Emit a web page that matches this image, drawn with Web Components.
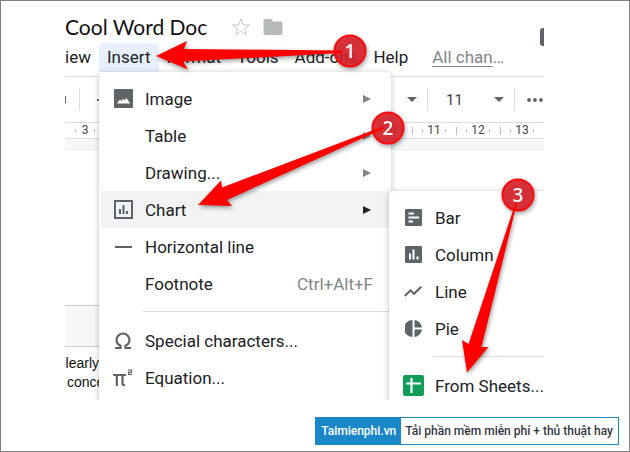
<!DOCTYPE html>
<html lang="en">
<head>
<meta charset="utf-8">
<title>Cool Word Doc</title>
<style>
  body { margin: 0; font-family: Roboto, "Liberation Sans", sans-serif; color: #202124; background: #fff; }
</style>
</head>
<body>
<doc-page></doc-page>

<script>
const define = (name, html) => {
  const template = document.createElement('template');
  template.innerHTML = html;
  customElements.define(name, class extends HTMLElement {
    constructor() {
      super();
      this.attachShadow({ mode: 'open' }).append(template.content.cloneNode(true));
    }
    connectedCallback() {
      this.shadowRoot.querySelectorAll('[data-attr]').forEach(el => {
        el.textContent = this.getAttribute(el.dataset.attr) || '';
      });
    }
  });
};

/* One row of a drop-down menu: icon slot, label, shortcut or submenu arrow */
define('menu-entry', `
  <style>
    :host { display: block; }
    button { display: flex; align-items: center; width: 100%; height: 37px; padding: 0 18px 0 0; border: 0;
      background: none; font: inherit; color: inherit; text-align: left; white-space: nowrap; }
    :host([active]) button { background: #f1f3f4; }
    .icon { width: 44px; flex: none; display: flex; justify-content: center; color: #5f6368; }
    .label { flex: 1; }
    .keys { color: #80868b; }
    .arrow { display: none; width: 8px; height: 8px; margin-right: 2px; fill: #80868b; }
    :host([submenu]) .arrow { display: block; }
    :host([active]) .arrow { fill: #202124; }
  </style>
  <button type="button" role="menuitem">
    <span class="icon"><slot name="icon"></slot></span>
    <span class="label"><slot></slot></span>
    <span class="keys" data-attr="keys"></span>
    <svg class="arrow" viewBox="0 0 8 8"><path d="M0 0 8 4 0 8Z"/></svg>
  </button>`);

define('menu-rule', `
  <style>
    :host { display: block; height: 1px; margin: 9px 0 10px 42px; background: #dadce0; }
  </style>`);

define('menu-panel', `
  <style>
    :host { display: block; box-sizing: border-box; padding: 8px 0 8px 2px; background: #fff;
      border-radius: 4px; box-shadow: 0 1px 6px rgba(60, 64, 67, .32); font-size: 17px; line-height: 24px; }
  </style>
  <div role="menu"><slot></slot></div>`);

define('title-bar', `
  <style>
    :host { display: flex; align-items: center; height: 42px; padding-top: 9px; box-sizing: border-box; }
    h1 { margin: 0; font: 400 21px/28px Lato, sans-serif; color: #111; white-space: nowrap; }
    button { padding: 0; border: 0; background: none; display: flex; }
    .star { margin-left: 24px; }
    .folder { margin-left: 12px; }
    .comments { margin-left: auto; width: 4px; height: 18px; margin-top: 20px; background: #5f6368; border-radius: 3px 0 0 3px; }
  </style>
  <h1>Cool Word Doc</h1>
  <button class="star" aria-label="Star"><svg width="20" height="20" viewBox="0 0 20 20"><path d="M10 1.8 12.1 7.8 18.4 7.9 13.4 11.7 15.2 17.8 10 14.2 4.8 17.8 6.6 11.7 1.6 7.9 7.9 7.8Z" fill="none" stroke="#c8cacc"/></svg></button>
  <button class="folder" aria-label="Move"><svg width="20" height="18" viewBox="0 0 20 18"><path d="M2.5 1H8l2 2.5h7.500a2 2 0 0 1 2 2V15a2 2 0 0 1-2 2h-15a2 2 0 0 1-2-2V3a2 2 0 0 1 2-2Z" fill="#b7b9bb"/></svg></button>
  <button class="comments" aria-label="Comments"></button>`);

define('menu-bar', `
  <style>
    :host { display: flex; height: 33px; font-size: 17px; border-bottom: 1px solid #dadce0; white-space: nowrap; }
    button, a { height: 29px; line-height: 29px; padding: 0 8px; border: 0; background: none; font-family: inherit; font-size: inherit; color: inherit; }
    .first { width: 34px; overflow: hidden; display: flex; justify-content: flex-end; flex: none; }
    .open { background: #e8f0fe; border-radius: 4px 4px 0 0; }
    a { margin-left: 8px; color: #80868b; text-decoration: none; }
    u { text-underline-offset: 3px; text-decoration-thickness: 1px; }
  </style>
  <div class="first"><button>View</button></div>
  <button class="open" aria-expanded="true">Insert</button>
  <button>Format</button><button>Tools</button><button>Add-ons</button><button>Help</button>
  <a href="#history"><u>All chan</u>…</a>`);

define('tool-bar', `
  <style>
    :host { display: flex; align-items: center; height: 45px; border-bottom: 1px solid #dadce0; color: #3c4043; }
    .bit { width: 1px; height: 7px; background: #5f6368; }
    .dash { width: 3px; height: 2px; background: #5f6368; margin-left: 17px; }
    i { width: 1px; height: 23px; background: #dadce0; }
    .left { margin-left: 13px; }
    .gap { flex: 1; }
    svg { fill: #5f6368; flex: none; }
    label { display: flex; align-items: center; width: 58px; margin: 0 10px 0 18px; }
    select { appearance: none; border: 0; background: none; padding: 0; flex: 1; font: 15px/20px Roboto, sans-serif; color: inherit; }
    .styles { margin-right: 10px; }
    .more { padding: 0 1px 0 12px; border: 0; background: none; display: flex; }
  </style>
  <span class="bit"></span><i class="left"></i><span class="dash"></span>
  <span class="gap"></span>
  <svg class="styles" width="10" height="5" viewBox="0 0 10 5"><path d="M0 0H10L5 5Z"/></svg>
  <i></i>
  <label><select aria-label="Font size"><option>11</option></select>
    <svg width="10" height="5" viewBox="0 0 10 5"><path d="M0 0H10L5 5Z"/></svg></label>
  <i></i>
  <button class="more" aria-label="More"><svg width="16" height="4" viewBox="0 0 16 4"><circle cx="2" cy="2" r="1.900"/><circle cx="8" cy="2" r="1.900"/><circle cx="14" cy="2" r="1.900"/></svg></button>`);

define('ruler-mark', `
  <style>
    :host { display: flex; align-items: center; justify-content: space-between; width: 44px; box-sizing: border-box;
      padding: 0 10px; height: 15px; font-size: 12px; line-height: 15px; }
    i { width: 1px; height: 3px; background: #bdc1c6; }
    :host([edge]) { background: linear-gradient(#bdc1c6, #bdc1c6) 0 50% / 1px 8px no-repeat; }
  </style>
  <i></i><slot></slot><i></i>`);

define('doc-ruler', `
  <style>
    :host { display: flex; height: 15px; border-bottom: 1px solid #dadce0; color: #444; }
    .first { margin-right: auto; width: 40px; }
  </style>
  <ruler-mark class="first">3</ruler-mark>
  <ruler-mark>10</ruler-mark><ruler-mark edge>11</ruler-mark><ruler-mark edge>12</ruler-mark><ruler-mark edge>13</ruler-mark>`);

define('doc-sheet', `
  <style>
    :host { display: block; padding-top: 10px; background: #f6f7f9; }
    .paper { background: #fff; border-top: 1px solid #eceef0; padding-top: 155px; min-height: 95px; }
    .band { height: 40px; background: #f7f7f7; border: 1px solid #ccc; border-width: 1px 0; }
    .line { width: 34px; overflow: hidden; display: flex; justify-content: flex-end; white-space: nowrap;
      font: 14px/19px "Liberation Sans", Arial, sans-serif; color: #111; }
    .start { justify-content: flex-start; padding-left: 2px; }
    .text { padding-top: 7px; }
  </style>
  <div class="paper"><div class="band"></div>
    <div class="text"><div class="line">Clearly</div><div class="line start">conce</div></div></div>`);

/* Numbered callouts with arrows, drawn above the editor */
define('step-arrows', `
  <style>
    :host { display: block; pointer-events: none; }
    svg { display: block; overflow: visible; filter: drop-shadow(1px 2px 2px rgba(0, 0, 0, .4)); }
    circle { fill: #dc2028; fill-opacity: .88; stroke: #f80a0e; stroke-width: 2; }
    path { fill: #f00; }
    text { fill: #fff; font: 600 19px "Open Sans", sans-serif; text-anchor: middle; }
  </style>
  <svg width="540" height="400" viewBox="0 0 540 400" role="img" aria-label="Steps 1, 2 and 3">
    <circle cx="350" cy="51" r="15.500"/><circle cx="388" cy="128" r="15.500"/><circle cx="518" cy="195" r="15.500"/>
    <path d="M156 56 187 41 184 49 342 50.500V53L183 61.500 188 69.500Z"/>
    <path d="M198 205 221 180.500 222 187.500 383 126.500 384 128.500 227 200 232 206Z"/>
    <path d="M467 372.500 462 340 468.500 344 515.500 203 517 203 481.500 347 488.500 347Z"/>
    <text x="350" y="58">1</text><text x="388" y="135">2</text><text x="518" y="202">3</text>
  </svg>`);

define('doc-editor', `
  <style>
    :host { display: block; position: relative; overflow: hidden; }
    .insert, .charts { position: absolute; }
    .insert { left: 34px; top: 71px; width: 292px; height: 400px; }
    .charts { left: 324px; top: 190px; width: 220px; height: 300px; }
    svg { display: block; }
  </style>
  <title-bar></title-bar>
  <menu-bar></menu-bar>
  <tool-bar></tool-bar>
  <doc-ruler></doc-ruler>
  <doc-sheet></doc-sheet>
  <menu-panel class="insert">
    <menu-entry submenu><svg slot="icon" width="19" height="19" viewBox="0 0 19 19"><rect width="19" height="19" rx="1" fill="#5f6368"/><path d="M3 14.500 6 10.500 7.500 12 9 9.500 10.500 11.500 12.500 9 16 14.500Z" fill="#fff"/></svg>Image</menu-entry>
    <menu-entry submenu>Table</menu-entry>
    <menu-entry submenu>Drawing...</menu-entry>
    <menu-entry submenu active><svg slot="icon" width="19" height="19" viewBox="0 0 19 19"><rect x="1" y="1" width="17" height="17" fill="none" stroke="#5f6368" stroke-width="2"/><path d="M5 9h2v5H5ZM8.500 5h2v9h-2ZM12 11h2v3h-2Z" fill="#5f6368"/></svg>Chart</menu-entry>
    <menu-entry><svg slot="icon" width="17" height="2" viewBox="0 0 17 2"><rect width="17" height="2" fill="#5f6368"/></svg>Horizontal line</menu-entry>
    <menu-entry keys="Ctrl+Alt+F">Footnote</menu-entry>
    <menu-rule></menu-rule>
    <menu-entry><svg slot="icon" width="18" height="18" viewBox="0 0 18 18"><path d="M1 16H6.500V13.800C4 12.500 2.500 10.500 2.500 8A6.500 6.500 0 0 1 15.500 8C15.500 10.500 14 12.500 11.500 13.800V16H17" fill="none" stroke="#5f6368" stroke-width="2.200"/></svg>Special characters...</menu-entry>
    <menu-entry><svg slot="icon" width="20" height="18" viewBox="0 0 20 18"><path d="M0 6H13M3.800 6V17M9.500 6V14.500Q9.500 16.500 12 16" fill="none" stroke="#5f6368" stroke-width="2.200"/><path d="M15 1H18.500V3.200H15.600V5.400H19" fill="none" stroke="#5f6368" stroke-width="1.200"/></svg>Equation...</menu-entry>
  </menu-panel>
  <menu-panel class="charts">
    <menu-entry><svg slot="icon" width="17" height="17" viewBox="0 0 17 17"><rect width="17" height="17" rx="1" fill="#5f6368"/><path d="M3.500 3.500H9V5.500H3.500ZM3.500 7.500H14V9.500H3.500ZM3.500 11.500H8V13.500H3.500Z" fill="#fff"/></svg>Bar</menu-entry>
    <menu-entry><svg slot="icon" width="17" height="17" viewBox="0 0 17 17"><rect width="17" height="17" rx="1" fill="#5f6368"/><path d="M4 7.500H6V13.500H4ZM7.500 3.500H9.500V13.500H7.500ZM11.500 10.500H13.500V13.500H11.500Z" fill="#fff"/></svg>Column</menu-entry>
    <menu-entry><svg slot="icon" width="18" height="11" viewBox="0 0 18 11"><path d="M.8 10 6.500 4.300 10 7.800 17.200.8" fill="none" stroke="#5f6368" stroke-width="2"/></svg>Line</menu-entry>
    <menu-entry><svg slot="icon" width="17" height="17" viewBox="0 0 17 17"><path d="M7.500 0V17A8.500 8.500 0 0 1 7.500 0ZM9.500 0A8.500 8.500 0 0 1 17 7.500H9.500ZM9.500 9.500H17A8.500 8.500 0 0 1 9.500 17Z" fill="#5f6368"/></svg>Pie</menu-entry>
    <menu-rule></menu-rule>
    <menu-entry><svg slot="icon" width="21" height="21" viewBox="0 0 21 21"><rect width="21" height="21" rx="2" fill="#0f9d58"/><path d="M3 8.500H18M8.500 3V18" stroke="#fff" stroke-width="2.200"/></svg>From Sheets...</menu-entry>
  </menu-panel>`);

define('source-tag', `
  <style>
    :host { display: flex; border: 1px solid #1a87c9; font-size: 12px; font-weight: 500; line-height: 26px; white-space: nowrap; }
    a { padding: 0 5px; background: #1a87c9; color: #fff; text-decoration: none; }
    span { padding: 0 5px 0 4px; color: #333842; }
  </style>
  <a href="#taimienphi">Taimienphi.vn</a><span><slot></slot></span>`);

define('doc-page', `
  <style>
    :host { display: flex; flex-direction: column; position: relative; box-sizing: border-box; height: 100vh; border: 1px solid #808080; }
    doc-editor { flex: 1; min-height: 0; margin: 0 85px 0 64px; }
    footer { display: flex; justify-content: flex-end; padding: 17px 10px 6px 0; }
    step-arrows { position: absolute; left: -1px; top: -1px; }
  </style>
  <doc-editor></doc-editor>
  <footer><source-tag>Tải phần mềm miễn phí + thủ thuật hay</source-tag></footer>
  <step-arrows></step-arrows>`);
</script>
</body>
</html>
